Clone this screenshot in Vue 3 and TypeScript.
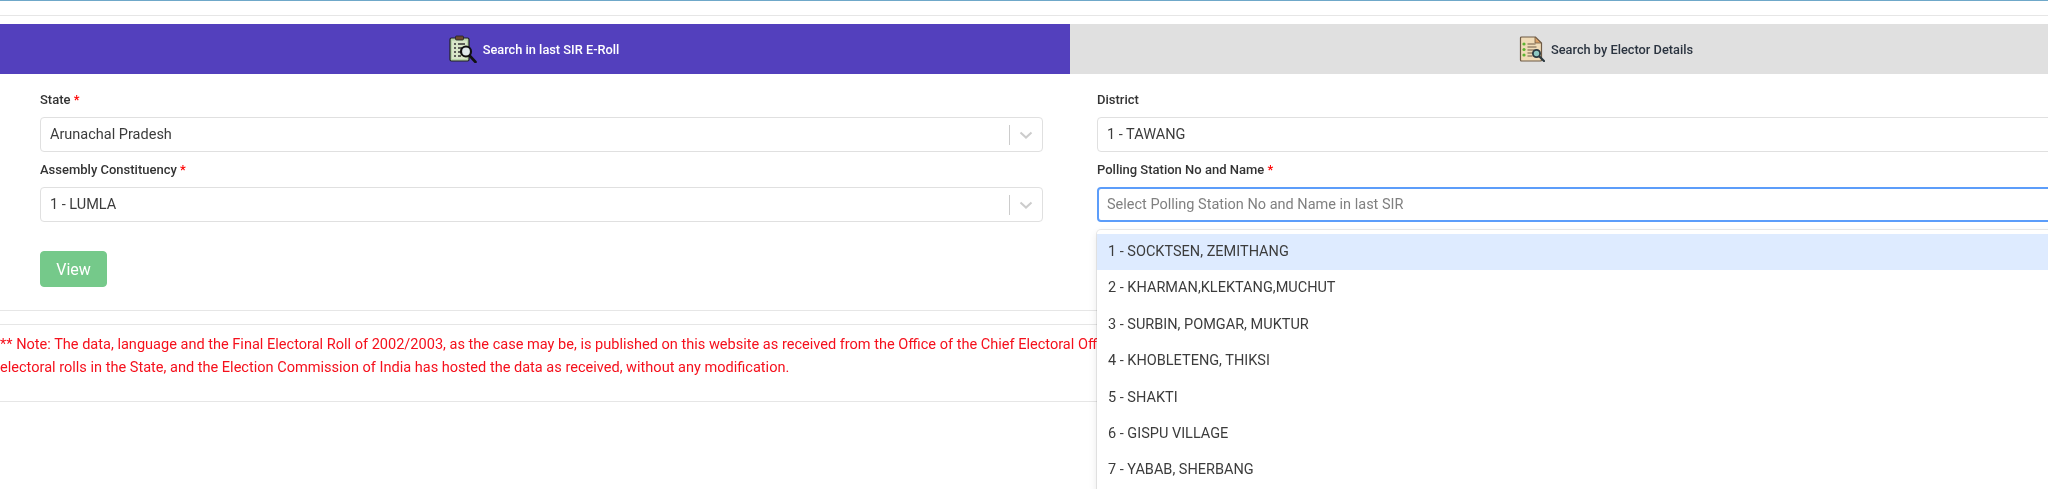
<script setup lang="ts">
interface Field { label: string; required: boolean; value: string; placeholder?: boolean; focus?: boolean }
const left: Field[] = [
  { label: 'State', required: true, value: 'Arunachal Pradesh' },
  { label: 'Assembly Constituency', required: true, value: '1 - LUMLA' },
]
const right: Field[] = [
  { label: 'District', required: false, value: '1 - TAWANG' },
  { label: 'Polling Station No and Name', required: true, value: 'Select Polling Station No and Name in last SIR', placeholder: true, focus: true },
]
const options: string[] = [
  '1 - SOCKTSEN, ZEMITHANG',
  '2 - KHARMAN,KLEKTANG,MUCHUT',
  '3 - SURBIN, POMGAR, MUKTUR',
  '4 - KHOBLETENG, THIKSI',
  '5 - SHAKTI',
  '6 - GISPU VILLAGE',
  '7 - YABAB, SHERBANG',
]
</script>

<template>
  <div class="page">
    <div class="topline"></div>
    <div class="rule"></div>
    <div class="tabs">
      <div class="tab active">
        <svg class="ico1" viewBox="0 0 28 28" width="28" height="28">
          <rect x="1" y="3" width="19" height="23" rx="1.5" fill="#b7d3a8" stroke="#222" stroke-width="1.2"/>
          <rect x="3" y="5.5" width="15" height="18.5" fill="#d8e6c8"/>
          <rect x="6.5" y="1" width="8" height="4" rx="1" fill="#6b4a32" stroke="#222" stroke-width=".8"/>
          <path d="M5 9h2M9 9h7M5 13h2M9 13h5M5 17h2M9 17h3M5 21h2M9 21h3" stroke="#333" stroke-width="1.3" fill="none"/>
          <path d="M20.5 20.5l6 6.5" stroke="#111" stroke-width="2.6" stroke-linecap="round"/>
          <circle cx="17" cy="16.5" r="5" fill="#dfe9ea" stroke="#111" stroke-width="2.2"/>
        </svg>
        <span>Search in last SIR E-Roll</span>
      </div>
      <div class="tab">
        <svg class="ico2" viewBox="0 0 26 26" width="26" height="26">
          <path d="M2.5 1h14l6 6v17a1 1 0 0 1-1 1h-19a1 1 0 0 1-1-1V2a1 1 0 0 1 1-1z" fill="#f0dcb8" stroke="#6e5a45" stroke-width="1.2"/>
          <path d="M16 1v6h6z" fill="#d9a066" stroke="#6e5a45" stroke-width=".8"/>
          <circle cx="5" cy="8" r="1.6" fill="#5cb531"/>
          <circle cx="5" cy="13.5" r="1.6" fill="#5cb531"/>
          <circle cx="5" cy="19" r="1.6" fill="#5cb531"/>
          <path d="M8.5 8h8M8.5 11h9M8.5 14h7M8.5 17h6M8.5 20h5" stroke="#6e5a45" stroke-width="1.1" fill="none"/>
          <path d="M20 20l5 5" stroke="#2c3a40" stroke-width="2.2" stroke-linecap="round"/>
          <circle cx="17.5" cy="17.5" r="3.6" fill="#8fc9c2" stroke="#2c3a40" stroke-width="1.8"/>
        </svg>
        <span>Search by Elector Details</span>
      </div>
    </div>

    <div class="form">
      <div class="col">
        <div v-for="f in left" :key="f.label" class="field">
          <label>{{ f.label }} <b v-if="f.required">*</b></label>
          <div class="select">
            <span class="val">{{ f.value }}</span>
            <i class="sep"></i>
            <svg class="chev" viewBox="0 0 20 20" width="20" height="20"><path d="M4.5 7.5 10 12.6l5.5-5.1" fill="none" stroke="#ccc" stroke-width="2"/></svg>
          </div>
        </div>
        <button class="view">View</button>
      </div>
      <div class="col">
        <div v-for="f in right" :key="f.label" class="field">
          <label>{{ f.label }} <b v-if="f.required">*</b></label>
          <div class="select" :class="{ focus: f.focus }">
            <span class="val" :class="{ ph: f.placeholder }">{{ f.value }}</span>
          </div>
        </div>
        <ul class="menu">
          <li v-for="(o, i) in options" :key="o" :class="{ hi: i === 0 }">{{ o }}</li>
        </ul>
      </div>
    </div>

    <div class="rule r2"></div>
    <div class="rule r3"></div>
    <p class="note">** Note: The data, language and the Final Electoral Roll of 2002/2003, as the case may be, is published on this website as received from the Office of the Chief Electoral Officer of the State, who maintains the<br>electoral rolls in the State, and the Election Commission of India has hosted the data as received, without any modification.</p>
    <div class="rule r4"></div>
  </div>
</template>

<style>
html, body { margin: 0; background: #fff; overflow: hidden; }
</style>

<style scoped>
.page { width: 2048px; height: 489px; overflow: hidden; font-family: Roboto, "Liberation Sans", sans-serif; color: #333; background: #fff; display: flex; flex-direction: column; filter: blur(.35px); }
.topline { height: 1px; background: #6fa8c9; flex: none; }
.rule { height: 1px; background: #e6e6e6; flex: none; }
.topline + .rule { margin-top: 14px; }
.tabs { flex: none; display: grid; grid-template-columns: 1070px 1070px; height: 50px; margin-top: 8px; }
.tab { display: flex; align-items: center; justify-content: center; background: #e0e0e0; color: #2b3440; font-size: 12.8px; font-weight: 500; gap: 6px; padding-left: 2px; }
.tab.active { background: #5340bd; color: #fff; padding-left: 0; padding-right: 2px; }
.form { flex: none; display: grid; grid-template-columns: 1003px 1003px; column-gap: 54px; padding-left: 40px; height: 236px; }
.col { position: relative; }
.field { display: flex; flex-direction: column; }
.field label { font-size: 13px; font-weight: 500; color: #333; line-height: 18px; margin-top: 17px; margin-bottom: 8px; }
.field + .field label { margin-top: 9px; }
.field label b { color: #f00; font-weight: 500; }
.select { height: 35px; box-sizing: border-box; border: 1px solid #e0e0e0; border-radius: 4px; display: flex; align-items: center; padding-left: 9px; background: #fff; }
.select.focus { border: 2px solid #5c9dfa; padding-left: 8px; }
.val { flex: 1; font-size: 14.5px; color: #3c3c3c; }
.val.ph { color: #808080; }
.sep { width: 1px; height: 20px; background: #ccc; }
.chev { margin: 0 6px; }
.view { display: block; margin-top: 29px; width: 67px; height: 36px; background: #75c98a; color: #fff; border: 1px solid #75c98a; border-radius: 4px; font: 400 16px Roboto, sans-serif; padding: 0; }
.menu { position: absolute; left: 0; top: 156px; width: 1003px; margin: 0; padding: 4px 0; list-style: none; background: #fff; border-radius: 4px; box-shadow: 0 0 0 1px rgba(0,0,0,.08), 0 3px 8px rgba(0,0,0,.1); z-index: 2; }
.menu li { height: 36.4px; line-height: 36.4px; padding-left: 11px; font-size: 14.5px; color: #3c3c3c; }
.menu li.hi { background: #deebff; }
.r3 { margin-top: 13px; }
.note { flex: none; margin: 8px 0 0; font-size: 14.55px; line-height: 23px; color: #f5101c; white-space: nowrap; }
.r4 { margin-top: 22px; }
</style>
